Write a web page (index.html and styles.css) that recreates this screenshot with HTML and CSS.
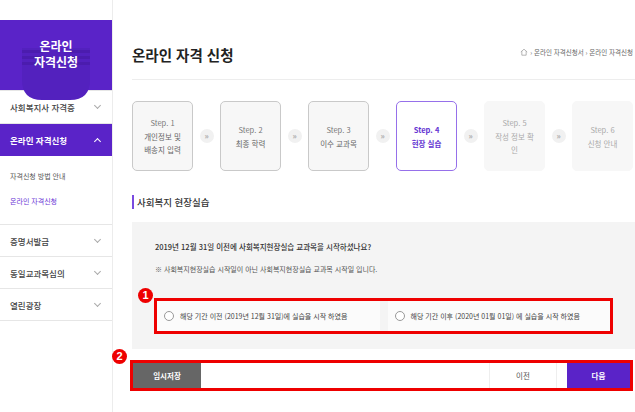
FILE: index.html
```html
<!DOCTYPE html>
<html lang="ko">
<head>
  <meta charset="UTF-8" />
  <title>온라인 자격 신청</title>
  <link rel="stylesheet" href="styles.css">
</head>
<body>
  <div class="wrap">
    <div class="side">
      <div class="logo">
        <svg class="logo-bg" width="72" height="56" viewBox="0 0 72 56">
          <path d="M2 2 H70 V34 Q70 54 50 54 H22 Q2 54 2 34 Z" fill="#5321be"/>
          <g fill="#4b1cae">
            <rect x="2" y="4" width="20" height="3"/>
            <rect x="2" y="10" width="20" height="3"/>
            <rect x="2" y="16" width="20" height="3"/>
            <rect x="50" y="4" width="20" height="3"/>
            <rect x="50" y="10" width="20" height="3"/>
            <rect x="50" y="16" width="20" height="3"/>
          </g>
        </svg>
        <div class="logo-text">
          <div>온라인</div>
          <div>자격신청</div>
        </div>
      </div>
      <ul class="menu">
        <li class="menu-item">사회복지사 자격증 <span class="chev"></span></li>
        <li class="menu-item on">온라인 자격신청 <span class="chev up"></span></li>
        <li class="sub">
          <div class="sub-item">자격신청 방법 안내</div>
          <div class="sub-item on">온라인 자격신청</div>
        </li>
        <li class="menu-item">증명서발급 <span class="chev"></span></li>
        <li class="menu-item">동일교과목심의 <span class="chev"></span></li>
        <li class="menu-item">열린광장 <span class="chev"></span></li>
      </ul>
    </div>

    <div class="main">
      <div class="page-head">
        <h1 class="page-title">온라인 자격 신청</h1>
        <div class="crumb">
          <svg width="8" height="8" viewBox="0 0 10 10"><path d="M1 5 L5 1.5 L9 5 M2.3 4 V9 H7.7 V4" fill="none" stroke="#999" stroke-width="0.9"/></svg>
          <span>› 온라인 자격신청서 › 온라인 자격신청</span>
        </div>
      </div>

      <div class="steps">
        <div class="step"><span class="step-no">Step. 1</span>개인정보 및<br>배송지 입력</div>
        <div class="step-arrow"><span>»</span></div>
        <div class="step"><span class="step-no">Step. 2</span>최종 학력</div>
        <div class="step-arrow"><span>»</span></div>
        <div class="step"><span class="step-no">Step. 3</span>이수 교과목</div>
        <div class="step-arrow"><span>»</span></div>
        <div class="step active"><span class="step-no">Step. 4</span>현장 실습</div>
        <div class="step-arrow"><span>»</span></div>
        <div class="step next"><span class="step-no">Step. 5</span>작성 정보 확<br>인</div>
        <div class="step-arrow"><span>»</span></div>
        <div class="step next"><span class="step-no">Step. 6</span>신청 안내</div>
      </div>

      <h2 class="sec-title">사회복지 현장실습</h2>

      <div class="qbox">
        <p class="q">2019년 12월 31일 이전에 사회복지현장실습 교과목을 시작하셨나요?</p>
        <p class="note">※ 사회복지현장실습 시작일이 아닌 사회복지현장실습 교과목 시작일 입니다.</p>
        <div class="opts mark">
          <span class="badge">1</span>
          <label class="opt"><span class="radio"></span>해당 기간 이전 (2019년 12월 31일)에 실습을 시작 하였음</label>
          <label class="opt"><span class="radio"></span>해당 기간 이후 (2020년 01월 01일) 에 실습을 시작 하였음</label>
        </div>
      </div>

      <div class="btns mark">
        <span class="badge b2">2</span>
        <button class="btn save">임시저장</button>
        <button class="btn prev">이전</button>
        <button class="btn next-btn">다음</button>
      </div>
    </div>
  </div>
</body>
</html>
```

FILE: styles.css
```css
body {
  margin: 0;
  background: #fff;
  color: #333;
  font-family: "Noto Sans CJK KR", "Noto Sans", sans-serif;
}
.wrap {
  display: flex;
  min-height: 412px;
  overflow: hidden;
}
.side {
  width: 112px;
  flex: none;
  border-right: 1px solid #ececec;
}
.logo {
  margin-top: 20px;
  height: 70px;
  background: #5a23c8;
  position: relative;
  display: flex;
  align-items: center;
  justify-content: center;
}
.logo-bg {
  position: absolute;
  left: 20px;
  top: 26px;
}
.logo-text {
  position: relative;
  color: #fff;
  font-weight: bold;
  font-size: 12px;
  line-height: 16px;
  text-align: center;
  margin-top: -2px;
}
.menu {
  list-style: none;
  margin: 0;
  padding: 0;
}
.menu-item {
  height: 31px;
  border-bottom: 1px solid #e6e6e6;
  display: flex;
  align-items: center;
  justify-content: space-between;
  padding: 0 12px 0 10px;
  font-size: 8.5px;
  font-weight: 500;
  color: #444;
}
.menu-item:first-child {
  height: 32px;
  border-top: 1px solid #e6e6e6;
}
.menu-item.on {
  background: #5a23c8;
  color: #fff;
  font-weight: bold;
  border-bottom-color: #5a23c8;
}
.chev {
  width: 4px;
  height: 4px;
  border-right: 1px solid #aaa;
  border-bottom: 1px solid #aaa;
  transform: rotate(45deg);
  margin-top: -3px;
}
.chev.up {
  border-color: #fff;
  transform: rotate(225deg);
  margin-top: 3px;
}
.sub {
  height: 69px;
  border-bottom: 1px solid #e6e6e6;
  padding: 14px 0 0 10px;
  box-sizing: border-box;
}
.sub-item {
  font-size: 7px;
  color: #555;
  line-height: 12px;
  margin-bottom: 13px;
}
.sub-item.on {
  color: #6a35d6;
}
.main {
  flex: 1;
  padding-left: 19px;
  min-width: 0;
}
.page-head {
  display: flex;
  justify-content: space-between;
  align-items: center;
  padding: 40px 0 9px;
  border-bottom: 1px solid #ededed;
}
.page-title {
  margin: 0;
  font-size: 14.5px;
  line-height: 30px;
  font-weight: bold;
  color: #222;
}
.crumb {
  display: flex;
  align-items: center;
  gap: 2px;
  font-size: 6.5px;
  color: #666;
  margin: -6px 2px 0 0;
  white-space: nowrap;
}
.steps {
  display: flex;
  align-items: center;
  margin-top: 21px;
  height: 70px;
}
.step {
  width: 61px;
  height: 70px;
  box-sizing: border-box;
  border: 1px solid #c9c9c9;
  border-radius: 5px;
  background: #f7f7f7;
  display: flex;
  flex-direction: column;
  align-items: center;
  justify-content: center;
  text-align: center;
  font-size: 7.5px;
  line-height: 13px;
  color: #666;
  flex: none;
}
.step-no {
  color: #777;
  margin-bottom: 1px;
}
.step.active {
  border: 1.5px solid #9670ea;
  background: #fff;
  color: #6435d2;
  font-weight: bold;
}
.step.active .step-no {
  color: #6435d2;
}
.step.next {
  border-color: #f7f7f7;
  color: #aaa;
}
.step.next .step-no {
  color: #aaa;
}
.step-arrow {
  width: 27px;
  display: flex;
  justify-content: center;
  align-items: center;
  flex: none;
}
.step-arrow span {
  width: 14px;
  height: 14px;
  border-radius: 50%;
  background: #f1f1f1;
  color: #aaa;
  font-size: 8px;
  font-weight: bold;
  line-height: 13px;
  text-align: center;
}
.sec-title {
  margin: 24px 0 0;
  font-size: 9.5px;
  line-height: 14px;
  font-weight: 500;
  color: #333;
  border-left: 2px solid #7a4be0;
  padding-left: 3px;
}
.qbox {
  margin-top: 13px;
  background: #f4f4f4;
  padding: 18px 0 15px 23px;
}
.q {
  margin: 0;
  font-size: 7.5px;
  line-height: 14px;
  font-weight: 500;
  color: #333;
}
.note {
  margin: 9px 0 0;
  font-size: 7px;
  line-height: 12px;
  color: #555;
}
.mark {
  border: 3px solid #ee0000;
  position: relative;
}
.badge {
  position: absolute;
  width: 15px;
  height: 15px;
  border-radius: 50%;
  background: #e00;
  color: #fff;
  font-size: 11px;
  font-weight: bold;
  line-height: 15px;
  text-align: center;
  left: -19px;
  top: -13px;
  font-family: "Liberation Sans", sans-serif;
}
.opts {
  margin: 23px 22px 0 -1px;
  display: flex;
  gap: 8px;
  height: 30px;
}
.opt {
  flex: 1;
  background: #fbfbfb;
  display: flex;
  align-items: center;
  padding-left: 7px;
  font-size: 7px;
  color: #444;
  white-space: nowrap;
}
.radio {
  width: 8px;
  height: 8px;
  border: 1px solid #999;
  border-radius: 50%;
  background: #fff;
  margin-right: 6px;
}
.btns {
  margin: 11px 2px 0 -2px;
  display: flex;
  height: 25px;
}
.btns .badge.b2 {
  left: -21px;
  top: -14px;
}
.btn {
  border: none;
  font-family: inherit;
  font-size: 7.5px;
  padding: 0;
  height: 25px;
  width: 68px;
}
.save {
  background: #666;
  color: #fff;
  font-weight: bold;
}
.prev {
  margin-left: auto;
  background: #fff;
  color: #555;
  border-left: 1px solid #eee;
  border-right: 1px solid #eee;
}
.next-btn {
  margin-left: 10px;
  width: 63px;
  background: #5a23c8;
  color: #fff;
  font-weight: bold;
}
```
